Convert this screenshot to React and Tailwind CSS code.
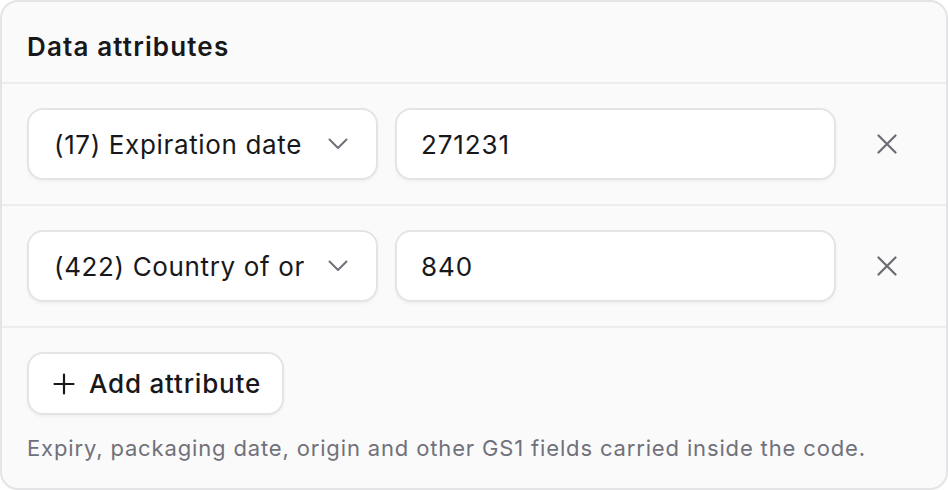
import React from 'react';

const rows = [
  { label: '(17) Expiration date', value: '271231' },
  { label: '(422) Country of origin', value: '840' },
];

const Chevron = () => (
  <svg width="20" height="12" viewBox="0 0 20 12" fill="none" stroke="#71717a" strokeWidth="2" strokeLinecap="round" strokeLinejoin="round">
    <path d="M1.5 1.5l8.5 8.5 8.5-8.5" />
  </svg>
);

const Cross = () => (
  <svg width="20" height="20" viewBox="0 0 20 20" fill="none" stroke="#6b6b72" strokeWidth="2.2" strokeLinecap="round">
    <path d="M1.5 1.5l17 17M18.5 1.5l-17 17" />
  </svg>
);

const Plus = () => (
  <svg width="22" height="22" viewBox="0 0 22 22" fill="none" stroke="#18181b" strokeWidth="2.2" strokeLinecap="round">
    <path d="M11 1.5v19M1.5 11h19" />
  </svg>
);

const App = () => {
  return (
    <div className="w-[948px] h-[490px] font-['Inter',sans-serif] text-[#18181b]">
      <div className="h-full flex flex-col rounded-[18px] border-2 border-[#e4e4e7] bg-[#fafafa] overflow-hidden">
        <div className="h-[82px] shrink-0 flex items-center px-[25px] border-b-2 border-[#ededf0]">
          <h2 className="text-[26px] font-semibold tracking-[1.15px] pt-[8px]">Data attributes</h2>
        </div>

        {rows.map(row => (
          <div key={row.label} className="h-[122px] shrink-0 flex items-center gap-[17px] px-[25px] border-b-2 border-[#ededf0]">
            <button className="w-[351px] h-[72px] shrink-0 flex items-center justify-between pl-[25px] pr-[28px] bg-white rounded-[16px] border-2 border-[#e4e4e7] shadow-[0_2px_3px_rgba(0,0,0,0.04)]">
              <span className="text-[26px] tracking-[0.65px] whitespace-nowrap overflow-hidden w-[250px] text-left">{row.label}</span>
              <Chevron />
            </button>
            <div className="flex-1 h-[72px] flex items-center px-[24px] bg-white rounded-[16px] border-2 border-[#e4e4e7] shadow-[0_2px_3px_rgba(0,0,0,0.04)]">
              <span className="text-[26px] tracking-[0.9px]">{row.value}</span>
            </div>
            <button className="w-[68px] h-[68px] shrink-0 flex items-center justify-center">
              <Cross />
            </button>
          </div>
        ))}

        <div className="flex-1 px-[25px] pt-[24px]">
          <button className="h-[63px] w-[257px] flex items-center gap-[14px] pl-[24px] bg-white rounded-[16px] border-2 border-[#e4e4e7] shadow-[0_2px_3px_rgba(0,0,0,0.04)]">
            <Plus />
            <span className="text-[26px] font-medium tracking-[0.8px]">Add attribute</span>
          </button>
          <p className="mt-[17px] text-[22px] tracking-[0.85px] text-[#71717a] whitespace-nowrap">Expiry, packaging date, origin and other GS1 fields carried inside the code.</p>
        </div>
      </div>
    </div>
  );
};

export default App;
